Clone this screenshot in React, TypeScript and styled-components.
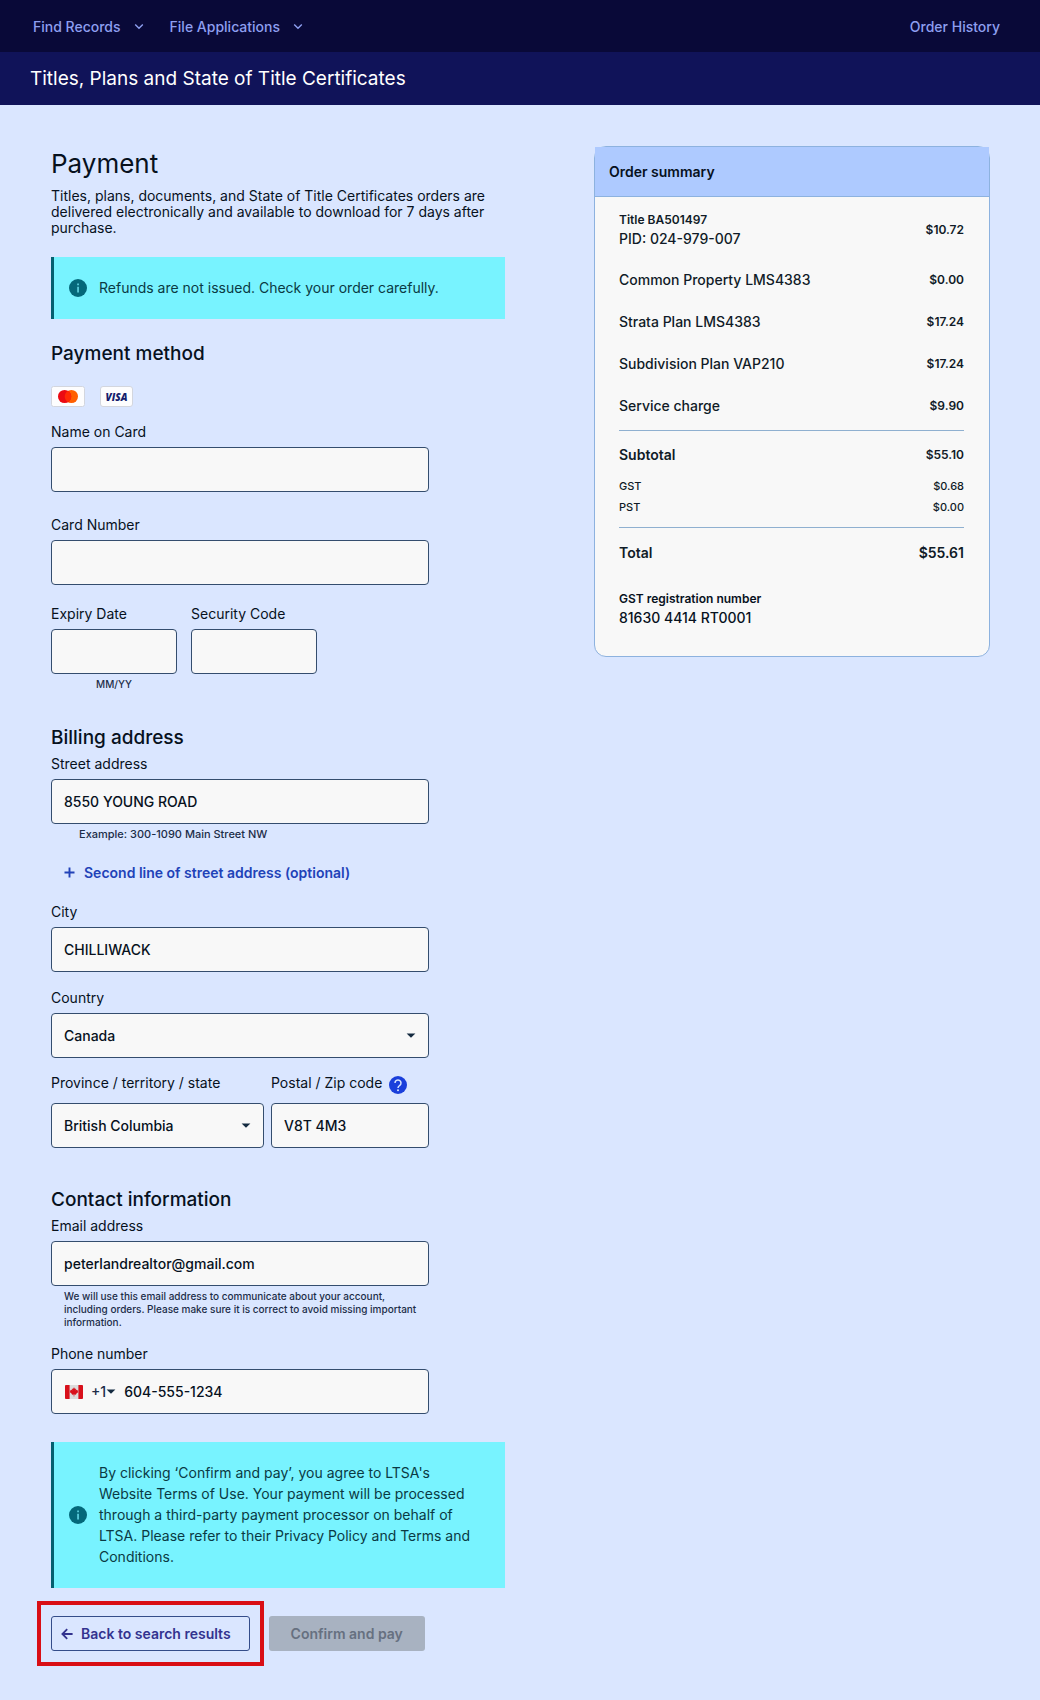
import React, { useState } from "react";
import styled, { createGlobalStyle, css } from "styled-components";

const GlobalStyle = createGlobalStyle`
  *, *::before, *::after { box-sizing: border-box; }
  body {
    margin: 0;
    background: #dae6ff;
    color: #07111d;
    font-family: Inter, "Liberation Sans", sans-serif;
    font-size: 14px;
  }
  h1, h2, h3, p { margin: 0; }
  button, input, select { font: inherit; color: inherit; margin: 0; }
`;

const TopNav = styled.nav`
  display: flex;
  align-items: center;
  gap: 25px;
  height: 52px;
  padding: 0 40px 0 33px;
  background: #090938;
`;

const NavButton = styled.button`
  display: flex;
  align-items: center;
  gap: 12px;
  padding: 0;
  border: 0;
  background: none;
  color: #8e9ff0;
  font-size: 14px;
  font-weight: 500;
`;

const NavLink = styled.a`
  margin-left: auto;
  color: #8e9ff0;
  font-weight: 500;
  text-decoration: none;
`;

const TitleBar = styled.header`
  display: flex;
  align-items: center;
  height: 53px;
  padding: 0 30px;
  background: #101359;
  color: #fff;
  font-size: 19px;
`;

const Layout = styled.main`
  display: grid;
  grid-template-columns: minmax(0, 454fr) minmax(0, 396fr);
  align-items: start;
  column-gap: 89px;
  padding: 41px 50px 49px 51px;
`;

const PageTitle = styled.h1`
  font-size: 26px;
  line-height: 36px;
  font-weight: 400;
`;

const Intro = styled.p`
  margin-top: 6px;
  line-height: 16px;
`;

const Notice = styled.div<{ $top: number }>`
  display: flex;
  align-items: center;
  gap: 12px;
  margin-top: ${(p) => p.$top}px;
  padding: 20px 32px 21px 15px;
  border-left: 3px solid #04606f;
  background: #78f3ff;
  color: #0a3a44;
  line-height: 21px;

  svg { flex: none; }
`;

const Form = styled.form`
  display: flex;
  flex-direction: column;
`;

const Section = styled.section<{ $top: number }>`
  display: flex;
  flex-direction: column;
  width: 100%;
  max-width: 378px;
  margin-top: ${(p) => p.$top}px;
`;

const SectionTitle = styled.h2`
  font-size: 19px;
  line-height: 24px;
  font-weight: 500;
`;

const Cards = styled.div`
  display: flex;
  gap: 15px;
  margin-top: 20px;
`;

const Field = styled.div<{ $top?: number; $grow?: string }>`
  display: flex;
  flex-direction: column;
  min-width: 0;
  flex: ${(p) => p.$grow ?? "none"};
  margin-top: ${(p) => p.$top ?? 0}px;
`;

const FieldRow = styled.div<{ $gap: number; $top: number }>`
  display: flex;
  align-items: flex-start;
  gap: ${(p) => p.$gap}px;
  margin-top: ${(p) => p.$top}px;
`;

const Label = styled.label`
  height: 24px;
  line-height: 18px;
`;

const LabelLine = styled.div`
  display: flex;
  gap: 6px;
  height: 29px;
`;

const box = css`
  width: 100%;
  height: 45px;
  border: 1px solid #344d6e;
  border-radius: 4px;
  background-color: #f8f8f8;
  font-weight: 500;
`;

const Input = styled.input`
  ${box}
  padding: 0 12px;
`;

const SelectBox = styled.div`
  display: grid;
  align-items: center;

  > * { grid-area: 1 / 1; }
  > svg { justify-self: end; margin-right: 13px; pointer-events: none; }
`;

const Select = styled.select`
  ${box}
  padding: 0 30px 0 12px;
  appearance: none;
`;

const Hint = styled.p<{ $indent?: number; $center?: boolean; $large?: boolean }>`
  padding: 4px 0 0 ${(p) => p.$indent ?? 0}px;
  color: #1c2d48;
  font-size: ${(p) => (p.$large ? 11 : 10)}px;
  line-height: 13px;
  font-weight: 500;
  text-align: ${(p) => (p.$center ? "center" : "left")};
`;

const HelpButton = styled.button`
  display: flex;
  width: 20px;
  height: 20px;
  padding: 2px 1px 0;
  border: 0;
  background: none;

  svg { flex: none; }
`;

const AddLineButton = styled.button`
  display: flex;
  align-items: center;
  align-self: flex-start;
  gap: 9px;
  height: 24px;
  margin: 19px 0 0 13px;
  padding: 0;
  border: 0;
  background: none;
  color: #2142b8;
  font-weight: 600;
`;

const PhoneBox = styled.div`
  ${box}
  display: flex;
  align-items: center;
  padding: 0 13px;
`;

const DialCode = styled.button`
  display: flex;
  align-items: center;
  padding: 0;
  border: 0;
  background: none;
  color: #1c2d48;

  span { margin-left: 8px; }
`;

const PhoneInput = styled.input`
  flex: 1;
  min-width: 0;
  margin-left: 8px;
  padding: 0;
  border: 0;
  background: none;
`;

const Actions = styled.div`
  display: flex;
  gap: 19px;
  margin-top: 28px;
`;

const Highlight = styled.div`
  position: relative;

  &::after {
    content: "";
    position: absolute;
    inset: -15px -14px;
    border: 4px solid #d90e15;
    pointer-events: none;
  }
`;

const BackButton = styled.button`
  display: flex;
  align-items: center;
  gap: 8px;
  height: 35px;
  padding: 0 18px 0 9px;
  border: 1px solid #344d8a;
  border-radius: 3px;
  background: none;
  color: #33338f;
  font-weight: 600;
`;

const ConfirmButton = styled.button`
  height: 35px;
  padding: 0 22px;
  border: 0;
  border-radius: 3px;
  background: #a8b2c1;
  color: #667080;
  font-weight: 600;
`;

const Summary = styled.aside`
  border: 1px solid #8db2df;
  border-radius: 12px;
  background: #f8f8f8;
`;

const SummaryTitle = styled.h2`
  height: 50px;
  padding: 0 14px;
  border-bottom: 1px solid #8db2df;
  background: #aecaff;
  font-size: 14px;
  line-height: 50px;
  font-weight: 600;
`;

const SummaryBody = styled.div`
  padding: 3px 25px 28px 24px;
`;

const PriceTable = styled.table`
  width: 100%;
  border-collapse: collapse;
  color: #101b27;

  th, td { padding: 0; text-align: left; font-weight: 500; }
  td { text-align: right; font-weight: 600; font-size: 12px; }
`;

type RowKind = "item" | "subtotal" | "tax" | "total";

const rowStyles = {
  item: css`height: 42px;`,
  subtotal: css`height: 45px; th { font-weight: 600; } th, td { padding-top: 3px; }`,
  tax: css`height: 21px; th, td { font-size: 11px; font-weight: 500; }`,
  total: css`height: 50px; th, td { font-size: 14px; font-weight: 600; }`,
};

const PriceRow = styled.tr<{ $kind: RowKind; $tall?: boolean }>`
  ${(p) => rowStyles[p.$kind]}
  ${(p) => p.$tall && css`height: 58px;`}
`;

const Divider = styled.tr<{ $space: number }>`
  th, td { height: ${(p) => p.$space}px; border-bottom: 1px solid #8fb0d0; }
`;

const Strong = styled.strong`
  display: block;
  font-size: 12px;
  line-height: 19px;
  font-weight: 600;
`;

const Plain = styled.span`
  display: block;
  line-height: 20px;
  font-weight: 500;
`;

const Registration = styled.p`
  margin-top: 12px;
`;

const Chevron = () => (
  <svg width="12" height="12" viewBox="0 0 12 12" fill="none" stroke="currentColor" strokeWidth="1.4" aria-hidden="true">
    <path d="M2.2 4.5 6 8.2l3.8-3.7" />
  </svg>
);

const Caret = () => (
  <svg width="10" height="5" viewBox="0 0 10 5" fill="#142a40" aria-hidden="true">
    <path d="M.6.4h8.8L5 4.8z" />
  </svg>
);

const InfoIcon = () => (
  <svg width="18" height="18" viewBox="0 0 18 18" aria-hidden="true">
    <circle cx="9" cy="9" r="9" fill="#04687a" />
    <path d="M8.2 4.5h1.7v1.7H8.2zM8.2 7.7h1.7v5.8H8.2z" fill="#5fd0de" />
  </svg>
);

const HelpIcon = () => (
  <svg width="18" height="18" viewBox="0 0 18 18" fill="none" aria-hidden="true">
    <circle cx="9" cy="9" r="9" fill="#1a3fdb" />
    <path d="M6 7a3 3 0 1 1 4.6 2.5C9.6 10.2 9 10.7 9 12" stroke="#dae6ff" strokeWidth="1.5" />
    <circle cx="9" cy="14.2" r="1" fill="#dae6ff" />
  </svg>
);

const PlusIcon = () => (
  <svg width="11" height="11" viewBox="0 0 11 11" stroke="currentColor" strokeWidth="1.9" aria-hidden="true">
    <path d="M5.5.5v10M.5 5.5h10" />
  </svg>
);

const ArrowIcon = () => (
  <svg width="12" height="12" viewBox="0 0 12 12" fill="none" stroke="currentColor" strokeWidth="1.8" aria-hidden="true">
    <path d="M11.6 6H1.600M6.200 1.200 1.400 6l4.800 4.800" />
  </svg>
);

const Mastercard = () => (
  <svg width="34" height="21" viewBox="0 0 34 21" role="img" aria-label="Mastercard">
    <rect x=".5" y=".5" width="33" height="20" rx="2" fill="#fdfdfe" stroke="#d3d6de" />
    <circle cx="20.4" cy="10.5" r="6.6" fill="#ff5f00" />
    <circle cx="13.6" cy="10.5" r="6.6" fill="#eb0a12" />
    <path d="M17 4.8a6.6 6.6 0 0 1 0 11.4 6.6 6.6 0 0 1 0-11.4" fill="#ff2a05" />
  </svg>
);

const VisaCard = styled.span`
  display: flex;
  align-items: center;
  justify-content: center;
  width: 33px;
  height: 21px;
  border: 1px solid #d3d6de;
  border-radius: 3px;
  background: #fdfdfe;
  color: #151d6d;
  font: italic 800 10px "Open Sans", sans-serif;
`;

const CanadaFlag = () => (
  <svg width="18" height="14" viewBox="0 0 18 14" aria-hidden="true">
    <rect width="18" height="14" rx="1" fill="#dcdcdc" />
    <path d="M1 0h3.600v14H1a1 1 0 0 1-1-1V1a1 1 0 0 1 1-1M13.400 0H17a1 1 0 0 1 1 1v12a1 1 0 0 1-1 1h-3.600z" fill="#d8101b" />
    <path d="m9 2.200 1 1.700 1.100-.5-.4 2.200 1.100-1 .3.800 1.100-.1-.4 1.300.5.400-2.300 1.900.2.900-1.900-.3v2h-.6v-2l-1.900.3.200-.9L4.700 7l.5-.4-.4-1.300 1.100.1.300-.8 1.100 1-.4-2.200 1.100.5z" fill="#d8101b" />
  </svg>
);

const items = [
  { label: "Common Property LMS4383", price: "$0.00" },
  { label: "Strata Plan LMS4383", price: "$17.24" },
  { label: "Subdivision Plan VAP210", price: "$17.24" },
  { label: "Service charge", price: "$9.90" },
];

const taxes = [
  { label: "GST", price: "$0.68" },
  { label: "PST", price: "$0.00" },
];

function TextField(props: {
  id: string;
  label: string;
  top?: number;
  grow?: string;
  value?: string;
  children?: React.ReactNode;
}) {
  const [value, setValue] = useState(props.value ?? "");
  return (
    <Field $top={props.top} $grow={props.grow}>
      <Label htmlFor={props.id}>{props.label}</Label>
      <Input id={props.id} value={value} onChange={(e) => setValue(e.target.value)} />
      {props.children}
    </Field>
  );
}

export default function App() {
  return (
    <>
      <GlobalStyle />
      <TopNav>
        <NavButton type="button">Find Records <Chevron /></NavButton>
        <NavButton type="button">File Applications <Chevron /></NavButton>
        <NavLink href="#orders">Order History</NavLink>
      </TopNav>
      <TitleBar>Titles, Plans and State of Title Certificates</TitleBar>

      <Layout>
        <Form onSubmit={(e) => e.preventDefault()}>
          <PageTitle>Payment</PageTitle>
          <Intro>
            Titles, plans, documents, and State of Title Certificates orders are delivered
            electronically and available to download for 7 days after purchase.
          </Intro>
          <Notice $top={21}>
            <InfoIcon />
            <p>Refunds are not issued. Check your order carefully.</p>
          </Notice>

          <Section $top={23}>
            <SectionTitle>Payment method</SectionTitle>
            <Cards>
              <Mastercard />
              <VisaCard>VISA</VisaCard>
            </Cards>
            <TextField id="name" label="Name on Card" top={16} />
            <TextField id="card" label="Card Number" top={24} />
            <FieldRow $gap={14} $top={20}>
              <TextField id="expiry" label="Expiry Date" grow="0 1 126px">
                <Hint $center>MM/YY</Hint>
              </TextField>
              <TextField id="cvc" label="Security Code" grow="0 1 126px" />
            </FieldRow>
          </Section>

          <Section $top={35}>
            <SectionTitle>Billing address</SectionTitle>
            <TextField id="street" label="Street address" top={5} value="8550 YOUNG ROAD">
              <Hint $indent={28} $large>Example: 300-1090 Main Street NW</Hint>
            </TextField>
            <AddLineButton type="button">
              <PlusIcon />
              Second line of street address (optional)
            </AddLineButton>
            <TextField id="city" label="City" top={19} value="CHILLIWACK" />
            <Field $top={17}>
              <Label htmlFor="country">Country</Label>
              <SelectBox>
                <Select id="country" defaultValue="Canada">
                  <option>Canada</option>
                </Select>
                <Caret />
              </SelectBox>
            </Field>
            <FieldRow $gap={7} $top={16}>
              <Field $grow="213 1 0">
                <LabelLine>
                  <Label htmlFor="province">Province / territory / state</Label>
                </LabelLine>
                <SelectBox>
                  <Select id="province" defaultValue="British Columbia">
                    <option>British Columbia</option>
                  </Select>
                  <Caret />
                </SelectBox>
              </Field>
              <Field $grow="158 1 0">
                <LabelLine>
                  <Label htmlFor="postal">Postal / Zip code</Label>
                  <HelpButton type="button" aria-label="Postal code help">
                    <HelpIcon />
                  </HelpButton>
                </LabelLine>
                <Input id="postal" defaultValue="V8T 4M3" />
              </Field>
            </FieldRow>
          </Section>

          <Section $top={40}>
            <SectionTitle>Contact information</SectionTitle>
            <TextField id="email" label="Email address" top={5} value="peterlandrealtor@gmail.com">
              <Hint $indent={13}>
                We will use this email address to communicate about your account, including
                orders. Please make sure it is correct to avoid missing important information.
              </Hint>
            </TextField>
            <Field $top={16}>
              <Label htmlFor="phone">Phone number</Label>
              <PhoneBox>
                <DialCode type="button" aria-label="Country code">
                  <CanadaFlag />
                  <span>+1</span>
                  <Caret />
                </DialCode>
                <PhoneInput id="phone" type="tel" defaultValue="604-555-1234" />
              </PhoneBox>
            </Field>
          </Section>

          <Notice $top={28}>
            <InfoIcon />
            <p>
              By clicking ‘Confirm and pay’, you agree to LTSA's Website Terms of Use. Your
              payment will be processed through a third-party payment processor on behalf of
              LTSA. Please refer to their Privacy Policy and Terms and Conditions.
            </p>
          </Notice>

          <Actions>
            <Highlight>
              <BackButton type="button">
                <ArrowIcon />
                Back to search results
              </BackButton>
            </Highlight>
            <ConfirmButton type="submit" disabled>Confirm and pay</ConfirmButton>
          </Actions>
        </Form>

        <Summary>
          <SummaryTitle>Order summary</SummaryTitle>
          <SummaryBody>
            <PriceTable>
              <tbody>
                <PriceRow $kind="item" $tall>
                  <th scope="row">
                    <Strong>Title BA501497</Strong>
                    <Plain>PID: 024-979-007</Plain>
                  </th>
                  <td>$10.72</td>
                </PriceRow>
                {items.map((i) => (
                  <PriceRow $kind="item" key={i.label}>
                    <th scope="row">{i.label}</th>
                    <td>{i.price}</td>
                  </PriceRow>
                ))}
                <Divider $space={4} aria-hidden="true"><td colSpan={2} /></Divider>
                <PriceRow $kind="subtotal">
                  <th scope="row">Subtotal</th>
                  <td>$55.10</td>
                </PriceRow>
                {taxes.map((t) => (
                  <PriceRow $kind="tax" key={t.label}>
                    <th scope="row">{t.label}</th>
                    <td>{t.price}</td>
                  </PriceRow>
                ))}
                <Divider $space={10} aria-hidden="true"><td colSpan={2} /></Divider>
                <PriceRow $kind="total">
                  <th scope="row">Total</th>
                  <td>$55.61</td>
                </PriceRow>
              </tbody>
            </PriceTable>
            <Registration>
              <Strong>GST registration number</Strong>
              <Plain>81630 4414 RT0001</Plain>
            </Registration>
          </SummaryBody>
        </Summary>
      </Layout>
    </>
  );
}
